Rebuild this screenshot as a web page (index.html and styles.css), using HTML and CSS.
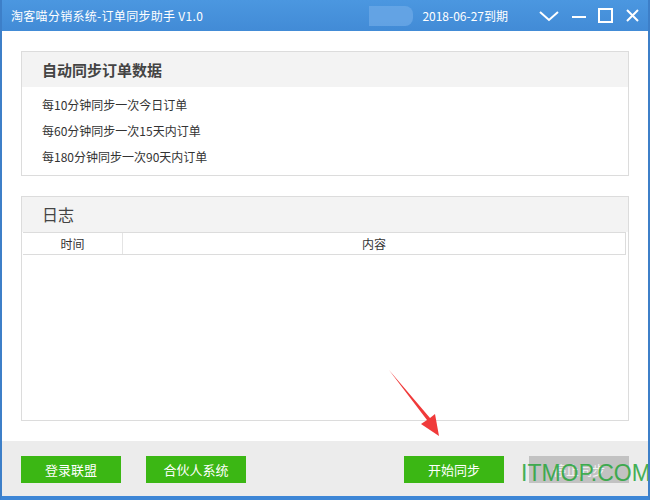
FILE: index.html
```html
<!DOCTYPE html>
<html lang="zh-CN">
<head>
    <meta charset="UTF-8">
    <title>淘客喵分销系统-订单同步助手</title>
    <link rel="stylesheet" href="styles.css">
</head>
<body>
    <div class="window">
        <div class="titlebar">
            <span class="title">淘客喵分销系统-订单同步助手 V1.0</span>
            <span class="blur"></span>
            <span class="expire">2018-06-27到期</span>
            <div class="controls">
                <svg width="22" height="14" viewBox="0 0 22 14"><path d="M2 3 L11 11 L20 3" fill="none" stroke="#fff" stroke-width="2"/></svg>
                <svg width="14" height="14" viewBox="0 0 14 14"><path d="M0 8 H14" stroke="#fff" stroke-width="2"/></svg>
                <svg width="15" height="15" viewBox="0 0 15 15"><rect x="1" y="1" width="13" height="13" fill="none" stroke="#fff" stroke-width="2"/></svg>
                <svg width="15" height="15" viewBox="0 0 15 15"><path d="M2 2 L13 13 M13 2 L2 13" stroke="#fff" stroke-width="2"/></svg>
            </div>
        </div>

        <div class="content">
            <!-- auto sync -->
            <div class="panel">
                <div class="panel-head">自动同步订单数据</div>
                <ul class="rules">
                    <li>每10分钟同步一次今日订单</li>
                    <li>每60分钟同步一次15天内订单</li>
                    <li>每180分钟同步一次90天内订单</li>
                </ul>
            </div>

            <!-- log -->
            <div class="panel log">
                <div class="panel-head">日志</div>
                <div class="log-table">
                    <div class="cell col-time">时间</div>
                    <div class="cell col-body">内容</div>
                </div>
            </div>
        </div>

        <div class="footer">
            <button class="btn">登录联盟</button>
            <button class="btn">合伙人系统</button>
            <span class="spacer"></span>
            <button class="btn">开始同步</button>
            <button class="btn btn-off">停止同步</button>
        </div>

        <svg class="arrow" width="70" height="80" viewBox="0 0 70 80">
            <path d="M2 2 L40 52 L34 56 L52 68 L48 46 L43 50 Z" fill="#f03a3a"/>
        </svg>
        <span class="watermark">ITMOP.COM</span>
    </div>
</body>
</html>
```

FILE: styles.css
```css
body {
    margin: 0;
    font-family: "Noto Sans CJK SC", "DejaVu Sans", sans-serif;
    font-size: 12px;
    color: #333;
}
.window {
    position: relative;
    width: 650px;
    height: 500px;
    box-sizing: border-box;
    border-left: 2px solid #3d7fc8;
    border-right: 2px solid #3d7fc8;
    border-bottom: 4px solid #3d86d6;
    display: flex;
    flex-direction: column;
    background: #fff;
    overflow: hidden;
}
.titlebar {
    height: 31px;
    margin: 0 -2px;
    background: linear-gradient(#4b97e0, #428bd6);
    color: #fff;
    display: flex;
    align-items: center;
    padding: 0 10px 0 11px;
    flex-shrink: 0;
}
.title {
    font-size: 12px;
    letter-spacing: 0.3px;
}
.blur {
    width: 44px;
    height: 20px;
    margin-left: auto;
    background: #6aa8e6;
    border-radius: 0 8px 8px 0;
    opacity: 0.8;
}
.expire {
    margin-left: 9px;
    font-size: 12px;
}
.controls {
    display: flex;
    align-items: center;
    gap: 12px;
    margin-left: 30px;
}
.content {
    flex: 1;
    padding: 20px 19px 20px 19px;
    display: flex;
    flex-direction: column;
    gap: 20px;
}
.panel {
    border: 1px solid #dcdcdc;
}
.panel-head {
    height: 35px;
    line-height: 35px;
    background: #f3f3f3;
    padding-left: 20px;
    font-size: 15px;
    font-weight: bold;
    color: #444;
}
.log .panel-head {
    font-weight: normal;
    font-size: 16px;
}
.rules {
    list-style: none;
    margin: 0;
    padding: 5px 0 5px 20px;
}
.rules li {
    height: 26px;
    line-height: 26px;
}
.log {
    flex: 1;
}
.log-table {
    display: flex;
    margin: 0 2px 0 1px;
    border-top: 1px solid #dcdcdc;
    border-bottom: 1px solid #dcdcdc;
    border-right: 1px solid #dcdcdc;
    height: 21px;
    line-height: 21px;
    text-align: center;
}
.col-time {
    width: 99px;
    border-right: 1px solid #e4e4e4;
}
.col-body {
    flex: 1;
}
.footer {
    height: 55px;
    background: #ececec;
    display: flex;
    align-items: center;
    padding: 0 19px;
    gap: 25px;
    flex-shrink: 0;
}
.spacer {
    flex: 1;
}
.btn {
    width: 100px;
    height: 27px;
    border: none;
    background: #3bb714;
    color: #fff;
    font-family: inherit;
    font-size: 13px;
    padding: 0;
    margin-top: 1px;
}
.btn-off {
    background: #c2c2c2;
    color: #f4f4f4;
}
.arrow {
    position: absolute;
    left: 385px;
    top: 368px;
}
.watermark {
    position: absolute;
    left: 519px;
    top: 460px;
    font-family: "Liberation Sans", sans-serif;
    font-size: 23px;
    color: #27a53a;
    opacity: 0.85;
}
```
